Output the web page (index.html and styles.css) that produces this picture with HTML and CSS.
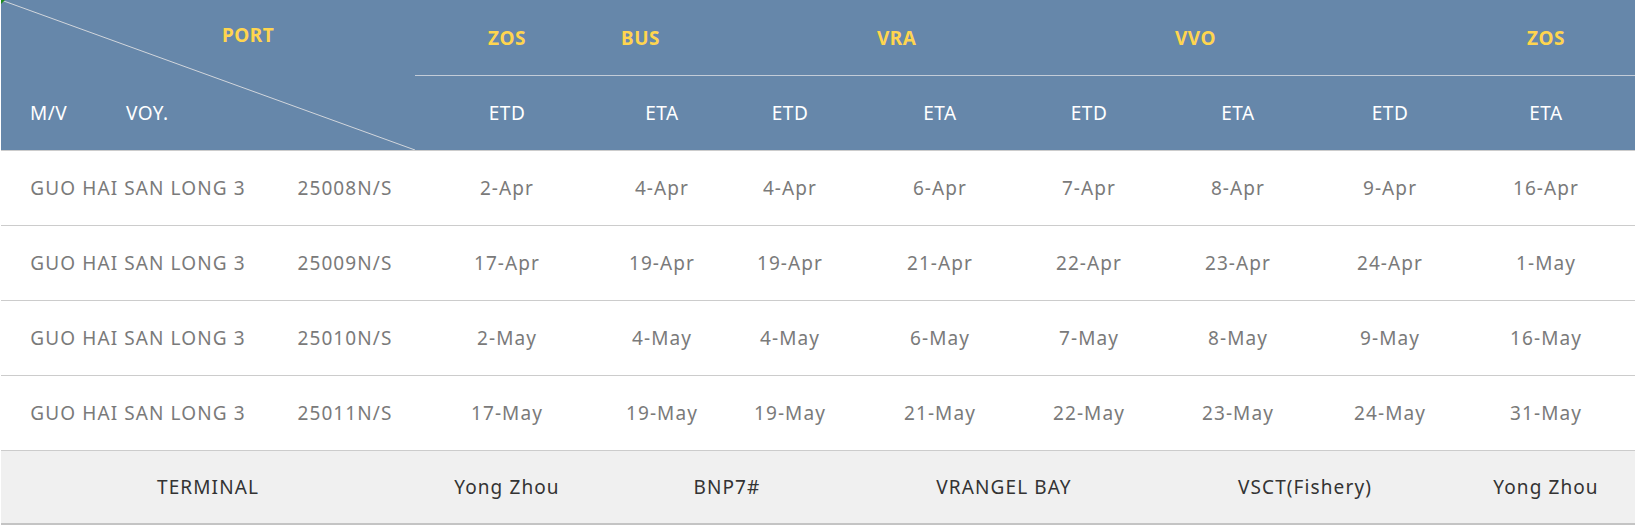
FILE: index.html
```html
<!DOCTYPE html>
<html lang="en">
<head>
<meta charset="utf-8">
<title>Schedule</title>
<link rel="stylesheet" href="styles.css">
</head>
<body>
<div class="wrap">
<table class="sched">
  <colgroup>
    <col class="c-mv"><col class="c-voy">
    <col class="c1"><col class="c2"><col class="c3"><col class="c4">
    <col class="c5"><col class="c6"><col class="c7"><col class="c8">
  </colgroup>
  <thead>
    <tr class="hr1">
      <th class="corner" rowspan="2" colspan="2">
        <svg class="diag" viewBox="0 0 100 100" preserveAspectRatio="none"><line x1="0" y1="0" x2="100" y2="100" vector-effect="non-scaling-stroke"/></svg>
        <span class="port">PORT</span>
        <span class="lbl-mv">M/V</span>
        <span class="lbl-voy">VOY.</span>
      </th>
      <th class="port-name">ZOS</th>
      <th class="port-name left" colspan="2">BUS</th>
      <th class="port-name left" colspan="2">VRA</th>
      <th class="port-name left" colspan="2">VVO</th>
      <th class="port-name">ZOS</th>
    </tr>
    <tr class="hr2">
      <th>ETD</th><th>ETA</th><th>ETD</th><th>ETA</th><th>ETD</th><th>ETA</th><th>ETD</th><th>ETA</th>
    </tr>
  </thead>
  <tbody>
    <tr><td>GUO HAI SAN LONG 3</td><td>25008N/S</td><td>2-Apr</td><td>4-Apr</td><td>4-Apr</td><td>6-Apr</td><td>7-Apr</td><td>8-Apr</td><td>9-Apr</td><td>16-Apr</td></tr>
    <tr><td>GUO HAI SAN LONG 3</td><td>25009N/S</td><td>17-Apr</td><td>19-Apr</td><td>19-Apr</td><td>21-Apr</td><td>22-Apr</td><td>23-Apr</td><td>24-Apr</td><td>1-May</td></tr>
    <tr><td>GUO HAI SAN LONG 3</td><td>25010N/S</td><td>2-May</td><td>4-May</td><td>4-May</td><td>6-May</td><td>7-May</td><td>8-May</td><td>9-May</td><td>16-May</td></tr>
    <tr><td>GUO HAI SAN LONG 3</td><td>25011N/S</td><td>17-May</td><td>19-May</td><td>19-May</td><td>21-May</td><td>22-May</td><td>23-May</td><td>24-May</td><td>31-May</td></tr>
  </tbody>
  <tfoot>
    <tr class="term">
      <td colspan="2">TERMINAL</td>
      <td>Yong Zhou</td>
      <td colspan="2">BNP7#</td>
      <td colspan="2">VRANGEL BAY</td>
      <td colspan="2">VSCT(Fishery)</td>
      <td>Yong Zhou</td>
    </tr>
  </tfoot>
</table>
</div>
</body>
</html>
```
FILE: styles.css
```css
html, body {
  margin: 0;
  padding: 0;
  background: #ffffff;
}
.wrap {
  padding-left: 1px;
  position: relative;
}
.wrap::before {
  content: "";
  position: absolute;
  left: 1px;
  top: 0;
  width: 0;
  height: 0;
  border-top: 4px solid #1f8a1f;
  border-right: 4px solid transparent;
  z-index: 2;
}
.sched {
  width: 1634px;
  table-layout: fixed;
  border-collapse: collapse;
  font-family: "Noto Sans", "Open Sans", "Liberation Sans", sans-serif;
  font-size: 19px;
  letter-spacing: 1.1px;
}
.c-mv { width: 274px; }
.c-voy { width: 140px; }
.c1 { width: 184px; }
.c2 { width: 126px; }
.c3 { width: 130px; }
.c4 { width: 170px; }
.c5 { width: 128px; }
.c6 { width: 170px; }
.c7 { width: 134px; }
.c8 { width: auto; }

th, td {
  padding: 0;
  text-align: center;
  font-weight: normal;
}
thead th {
  background: #6687aa;
  color: #ffffff;
  letter-spacing: 0.5px;
}
.hr1 th {
  height: 75px;
  border-bottom: 1px solid #c3ccd8;
}
.hr2 th {
  height: 74px;
  border-bottom: 1px solid #cccccc;
}
.hr1 .corner {
  position: relative;
  border-bottom: 1px solid #cccccc;
}
.port-name {
  color: #ffd54f;
  font-weight: bold;
}
.port-name.left {
  text-align: left;
  padding-left: 22px;
}
.diag {
  position: absolute;
  left: 0;
  top: 0;
  width: 100%;
  height: 100%;
}
.diag line {
  stroke: #d2d6dc;
  stroke-width: 1;
}
.port {
  position: absolute;
  left: 221px;
  top: 22px;
  color: #ffd54f;
  font-weight: bold;
}
.lbl-mv {
  position: absolute;
  left: 29px;
  top: 100px;
}
.lbl-voy {
  position: absolute;
  left: 125px;
  top: 100px;
}
tbody td {
  height: 74px;
  color: #7a7a7a;
  border-bottom: 1px solid #cccccc;
}
.term td {
  height: 72px;
  background: #f0f0f0;
  color: #333333;
  border-bottom: 2px solid #c4c4c4;
}
```
